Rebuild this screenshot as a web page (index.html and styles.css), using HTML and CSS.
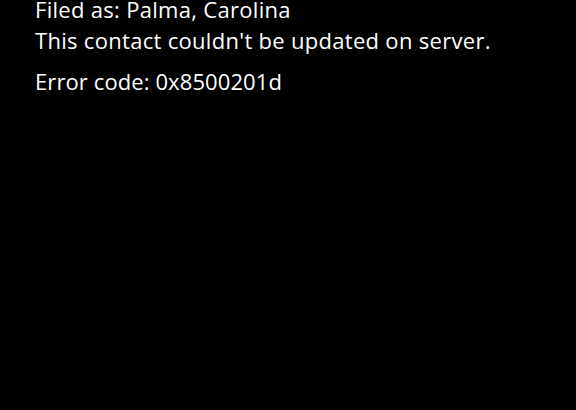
FILE: index.html
```html
<!DOCTYPE html>
<html>
<head>
<meta charset="utf-8">
<link rel="stylesheet" href="styles.css">
</head>
<body>
<div class="panel">
  <p class="line first">Filed as: Palma, Carolina</p>
  <p class="line message">This contact couldn't be updated on server.</p>
  <p class="line code">Error code: 0x8500201d</p>
</div>
</body>
</html>
```
FILE: styles.css
```css
html, body {
  margin: 0;
  padding: 0;
  background: #000;
  width: 576px;
  height: 410px;
  overflow: hidden;
}
.panel {
  padding: 0 0 0 35px;
  color: #fff;
  font-family: "Open Sans", "Noto Sans", sans-serif;
  font-size: 22px;
  letter-spacing: 0.3px;
}
.line {
  margin: 0;
  line-height: 31px;
  white-space: nowrap;
}
.first {
  line-height: 19px;
}
.message {
  margin-top: 6px;
}
.code {
  margin-top: 10px;
  letter-spacing: 0.1px;
}
```
